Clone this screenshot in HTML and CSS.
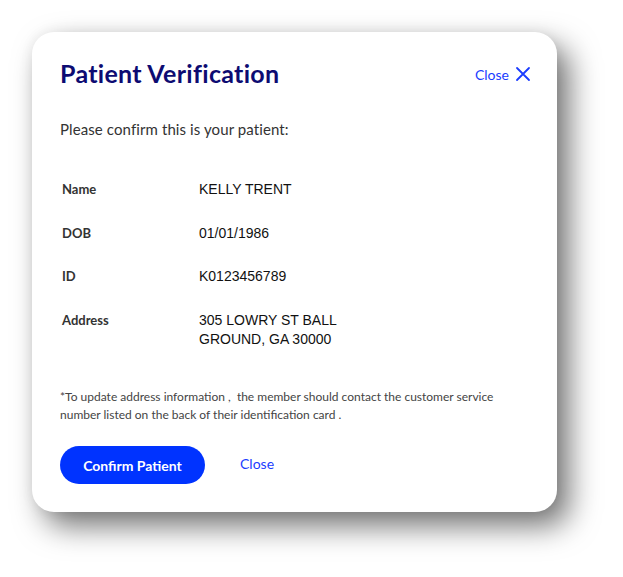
FILE: index.html
```html
<!DOCTYPE html>
<html lang="en">
<head>
<meta charset="utf-8">
<title>Patient Verification</title>
<link rel="stylesheet" href="styles.css">
</head>
<body>
<div class="card">
  <div class="header">
    <h1 class="title">Patient Verification</h1>
    <a class="close-top" href="#">Close
      <svg class="x" width="16" height="16" viewBox="0 0 16 16"><path d="M2 2 L14 14 M14 2 L2 14" stroke="#1a3cff" stroke-width="1.8" fill="none" stroke-linecap="round"/></svg>
    </a>
  </div>
  <p class="intro">Please confirm this is your patient:</p>
  <div class="details">
    <div class="label">Name</div><div class="value">KELLY TRENT</div>
    <div class="label">DOB</div><div class="value">01/01/1986</div>
    <div class="label">ID</div><div class="value">K0123456789</div>
    <div class="label">Address</div><div class="value">305 LOWRY ST BALL<br>GROUND, GA 30000</div>
  </div>
  <p class="note">*To update address information ,&nbsp; the member should contact the customer service number listed on the back of their identification card .</p>
  <div class="actions">
    <button class="confirm">Confirm Patient</button>
    <a class="close-link" href="#">Close</a>
  </div>
</div>
</body>
</html>
```
FILE: styles.css
```css
html, body {
  margin: 0;
  padding: 0;
  background: #ffffff;
}
body {
  box-sizing: border-box;
  min-height: 577px;
  padding: 32px 0 0 32px;
  font-family: "Lato", "Open Sans", sans-serif;
}
.card {
  box-sizing: border-box;
  width: 525px;
  height: 480px;
  background: #fff;
  border-radius: 22px;
  box-shadow: 12px 14px 30px rgba(0,0,0,0.55), 0 0 14px rgba(0,0,0,0.06);
  padding: 26px 26px 0 28px;
}
.header {
  display: flex;
  justify-content: space-between;
  align-items: center;
  height: 30px;
}
.title {
  margin: 0;
  font-size: 25px;
  font-weight: 700;
  color: #0d0b72;
  letter-spacing: 0.3px;
}
.close-top {
  display: flex;
  align-items: center;
  gap: 6px;
  color: #1a3cff;
  text-decoration: none;
  font-size: 14px;
  margin-top: 2px;
}
.intro {
  margin: 32px 0 0 0;
  font-size: 15px;
  color: #333;
  letter-spacing: 0.1px;
}
.details {
  display: grid;
  grid-template-columns: 137px 1fr;
  row-gap: 24.7px;
  margin: 42px 0 0 2px;
  line-height: 19px;
}
.label {
  font-size: 13px;
  font-weight: 700;
  color: #333;
}
.value {
  font-family: "Liberation Sans", Arial, sans-serif;
  font-size: 14px;
  color: #111;
}
.note {
  margin: 39px 0 0 0;
  font-size: 12px;
  line-height: 18px;
  color: #444;
  width: 440px;
}
.actions {
  display: flex;
  align-items: center;
  gap: 35px;
  margin-top: 22px;
}
.confirm {
  width: 145px;
  height: 38px;
  border: none;
  border-radius: 19px;
  background: #0033ff;
  color: #fff;
  font-family: "Lato", sans-serif;
  font-weight: 700;
  font-size: 14px;
}
.close-link {
  color: #1a3cff;
  text-decoration: none;
  font-size: 14px;
  margin-top: -3px;
}
```
